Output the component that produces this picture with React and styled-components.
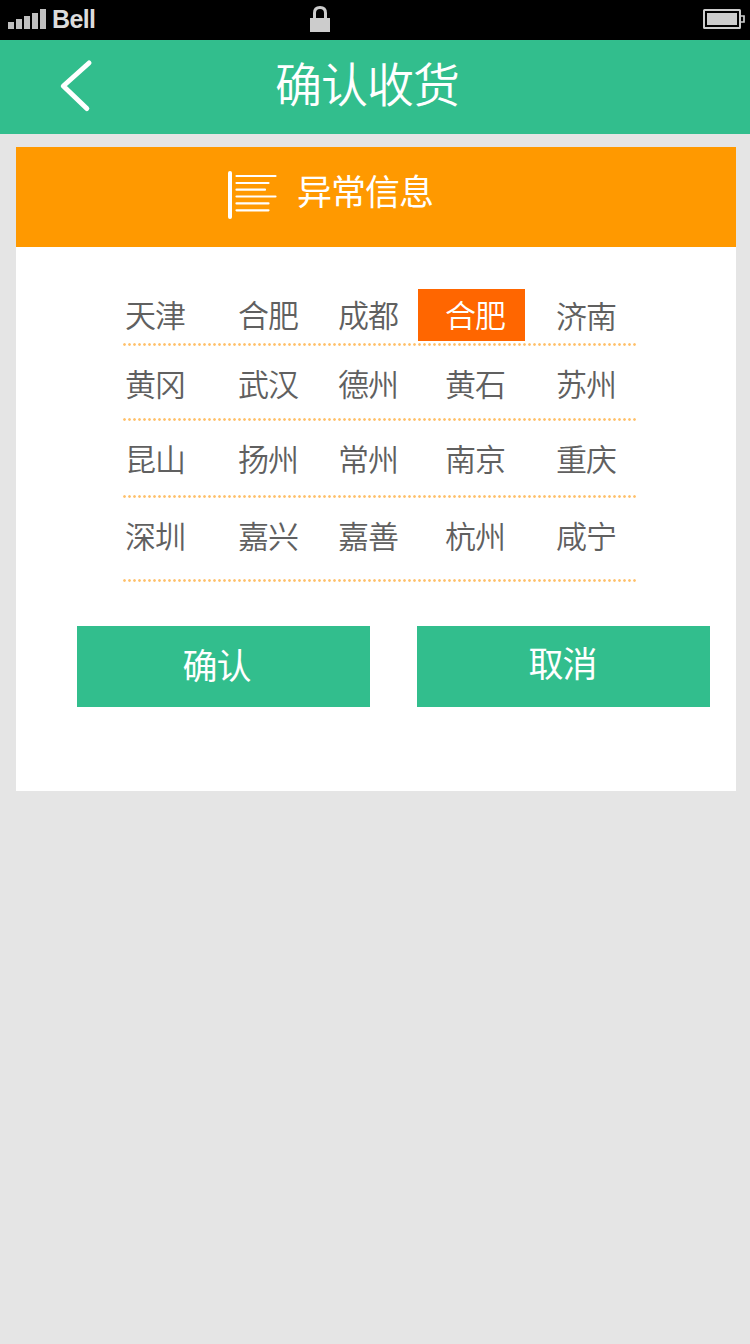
import styled, { createGlobalStyle } from 'styled-components'

const GlobalStyle = createGlobalStyle`
  body {
    margin: 0;
    background: #e5e5e5;
    font-family: 'Noto Sans CJK SC', sans-serif;
  }
  * {
    box-sizing: border-box;
  }
`
const Page = styled.div`
  width: 750px;
  height: 1344px;
  overflow: hidden;
  background: #e5e5e5;
`
const StatusBar = styled.div`
  display: grid;
  grid-template-columns: 310px 1fr 47px;
  height: 40px;
  background: #000;
`
const Carrier = styled.div`
  display: flex;
  padding-left: 8px;
  font: bold 25px/38px 'Liberation Sans', sans-serif;
  letter-spacing: -0.6px;
  color: #dcdcdc;
`
const Signal = styled.div`
  display: flex;
  align-items: flex-end;
  gap: 2px;
  height: 29px;
  margin-right: 6px;
`
const Bar = styled.i`
  width: 6px;
  height: ${props => props.$height}px;
  background: #bfbfbf;
`
const Header = styled.header`
  display: grid;
  grid-template-columns: 275px 1fr;
  height: 94px;
  background: #32be8d;
`
const BackButton = styled.button`
  display: block;
  padding: 0 0 0 58px;
  border: 0;
  background: none;
  text-align: left;
  svg {
    display: block;
  }
`
const Title = styled.h1`
  margin: 0;
  font-size: 47px;
  font-weight: 350;
  line-height: 84px;
  letter-spacing: -1px;
  color: #fff;
`
const Card = styled.section`
  width: 720px;
  height: 644px;
  margin: 13px 0 0 16px;
  background: #fff;
`
const CardHead = styled.div`
  display: flex;
  height: 100px;
  padding-left: 211px;
  background: #ff9900;
`
const CardTitle = styled.h2`
  margin: 0 0 0 17px;
  font-size: 35px;
  font-weight: 400;
  line-height: 86px;
  letter-spacing: -1px;
  color: #fff;
`
const CityList = styled.div`
  width: 513px;
  margin: 42px 0 0 107px;
`
const CityRow = styled.div`
  display: grid;
  grid-template-columns: 115px 100px 80px 107px 111px;
  height: ${props => props.$height}px;
  padding-top: ${props => props.$top}px;
  /* 橙色圆点分隔线 */
  background: radial-gradient(circle at 1.5px 1.5px, #ffc069 0.9px, transparent 1.7px) 0 100% / 5px 3px repeat-x;
`
const City = styled.div`
  height: 52px;
  padding-left: ${props => props.$indent}px;
  font-size: 31px;
  font-weight: 350;
  line-height: ${props => props.$line || 49}px;
  letter-spacing: -1px;
  white-space: nowrap;
  color: ${props => props.$active ? '#fff' : '#606060'};
  background: ${props => props.$active ? '#ff6600' : 'transparent'};
`
const Actions = styled.div`
  display: flex;
  gap: 47px;
  margin: 44px 0 0 61px;
`
const Button = styled.button`
  width: 293px;
  height: 81px;
  padding: 0 ${props => props.$right}px ${props => props.$bottom}px 0;
  border: 0;
  background: #32be8d;
  font-family: inherit;
  font-size: 35px;
  font-weight: 400;
  letter-spacing: -1px;
  color: #fff;
`

const indents = [2, 0, 0, 27, 31]
const rows = [
  { top: 0, height: 57, cities: ['天津', '合肥', '成都', '合肥', '济南'], active: 3 },
  { top: 12, height: 75, cities: ['黄冈', '武汉', '德州', '黄石', '苏州'] },
  { top: 12, height: 77, cities: ['昆山', '扬州', '常州', '南京', '重庆'] },
  { top: 12, height: 84, cities: ['深圳', '嘉兴', '嘉善', '杭州', '咸宁'] },
]

const LockIcon = () => (
  <svg width="20" height="40" viewBox="0 0 20 40">
    <path d="M4.5 19V13Q4.5 7.5 10 7.5T15.5 13V19" fill="none" stroke="#ccc" strokeWidth="3" />
    <path d="M0 18h20v14H0z" fill="#ccc" />
  </svg>
)

const BatteryIcon = () => (
  <svg width="42" height="40" viewBox="0 0 42 40">
    <rect x="1" y="10" width="36" height="18" rx="0.5" fill="none" stroke="#ccc" strokeWidth="2" />
    <path d="M4 13h30v12H4z" fill="#ccc" />
    <path d="M38 16h3v6h-3" fill="none" stroke="#ccc" strokeWidth="1.7" />
  </svg>
)

const BackIcon = () => (
  <svg width="40" height="94" viewBox="0 0 40 94">
    <path d="M31 23L5.3 46L28.8 68.5" fill="none" stroke="#fff" strokeWidth="5" strokeLinecap="round" strokeLinejoin="round" />
  </svg>
)

const ListIcon = () => (
  <svg width="53" height="100" viewBox="0 0 53 100">
    <path d="M3 26V70" stroke="#fff" strokeWidth="4" strokeLinecap="round" />
    <path
      d="M9.5 29H48.5M9.5 36H41.5M9.5 42.7H38M9.5 49.5H48.5M9.5 56.4H41.5M9.5 63.3H41.5"
      stroke="#fff" strokeWidth="2.2" strokeLinecap="round"
    />
  </svg>
)

function App() {
  return (
    <Page>
      <GlobalStyle />
      <StatusBar>
        <Carrier>
          <Signal>
            {[7, 10, 13, 16, 20].map(h => <Bar key={h} $height={h} />)}
          </Signal>
          Bell
        </Carrier>
        <LockIcon />
        <BatteryIcon />
      </StatusBar>
      <Header>
        <BackButton aria-label="返回"><BackIcon /></BackButton>
        <Title>确认收货</Title>
      </Header>
      <Card>
        <CardHead>
          <ListIcon />
          <CardTitle>异常信息</CardTitle>
        </CardHead>
        <CityList>
          {rows.map((row, r) => (
            <CityRow key={r} $top={row.top} $height={row.height}>
              {row.cities.map((city, c) => (
                <City key={c} $indent={indents[c]} $active={row.active === c} $line={r === 0 && c === 4 ? 51 : 49}>
                  {city}
                </City>
              ))}
            </CityRow>
          ))}
        </CityList>
        <Actions>
          <Button $right={14} $bottom={7}>确认</Button>
          <Button $right={2} $bottom={11}>取消</Button>
        </Actions>
      </Card>
    </Page>
  )
}

export default App
